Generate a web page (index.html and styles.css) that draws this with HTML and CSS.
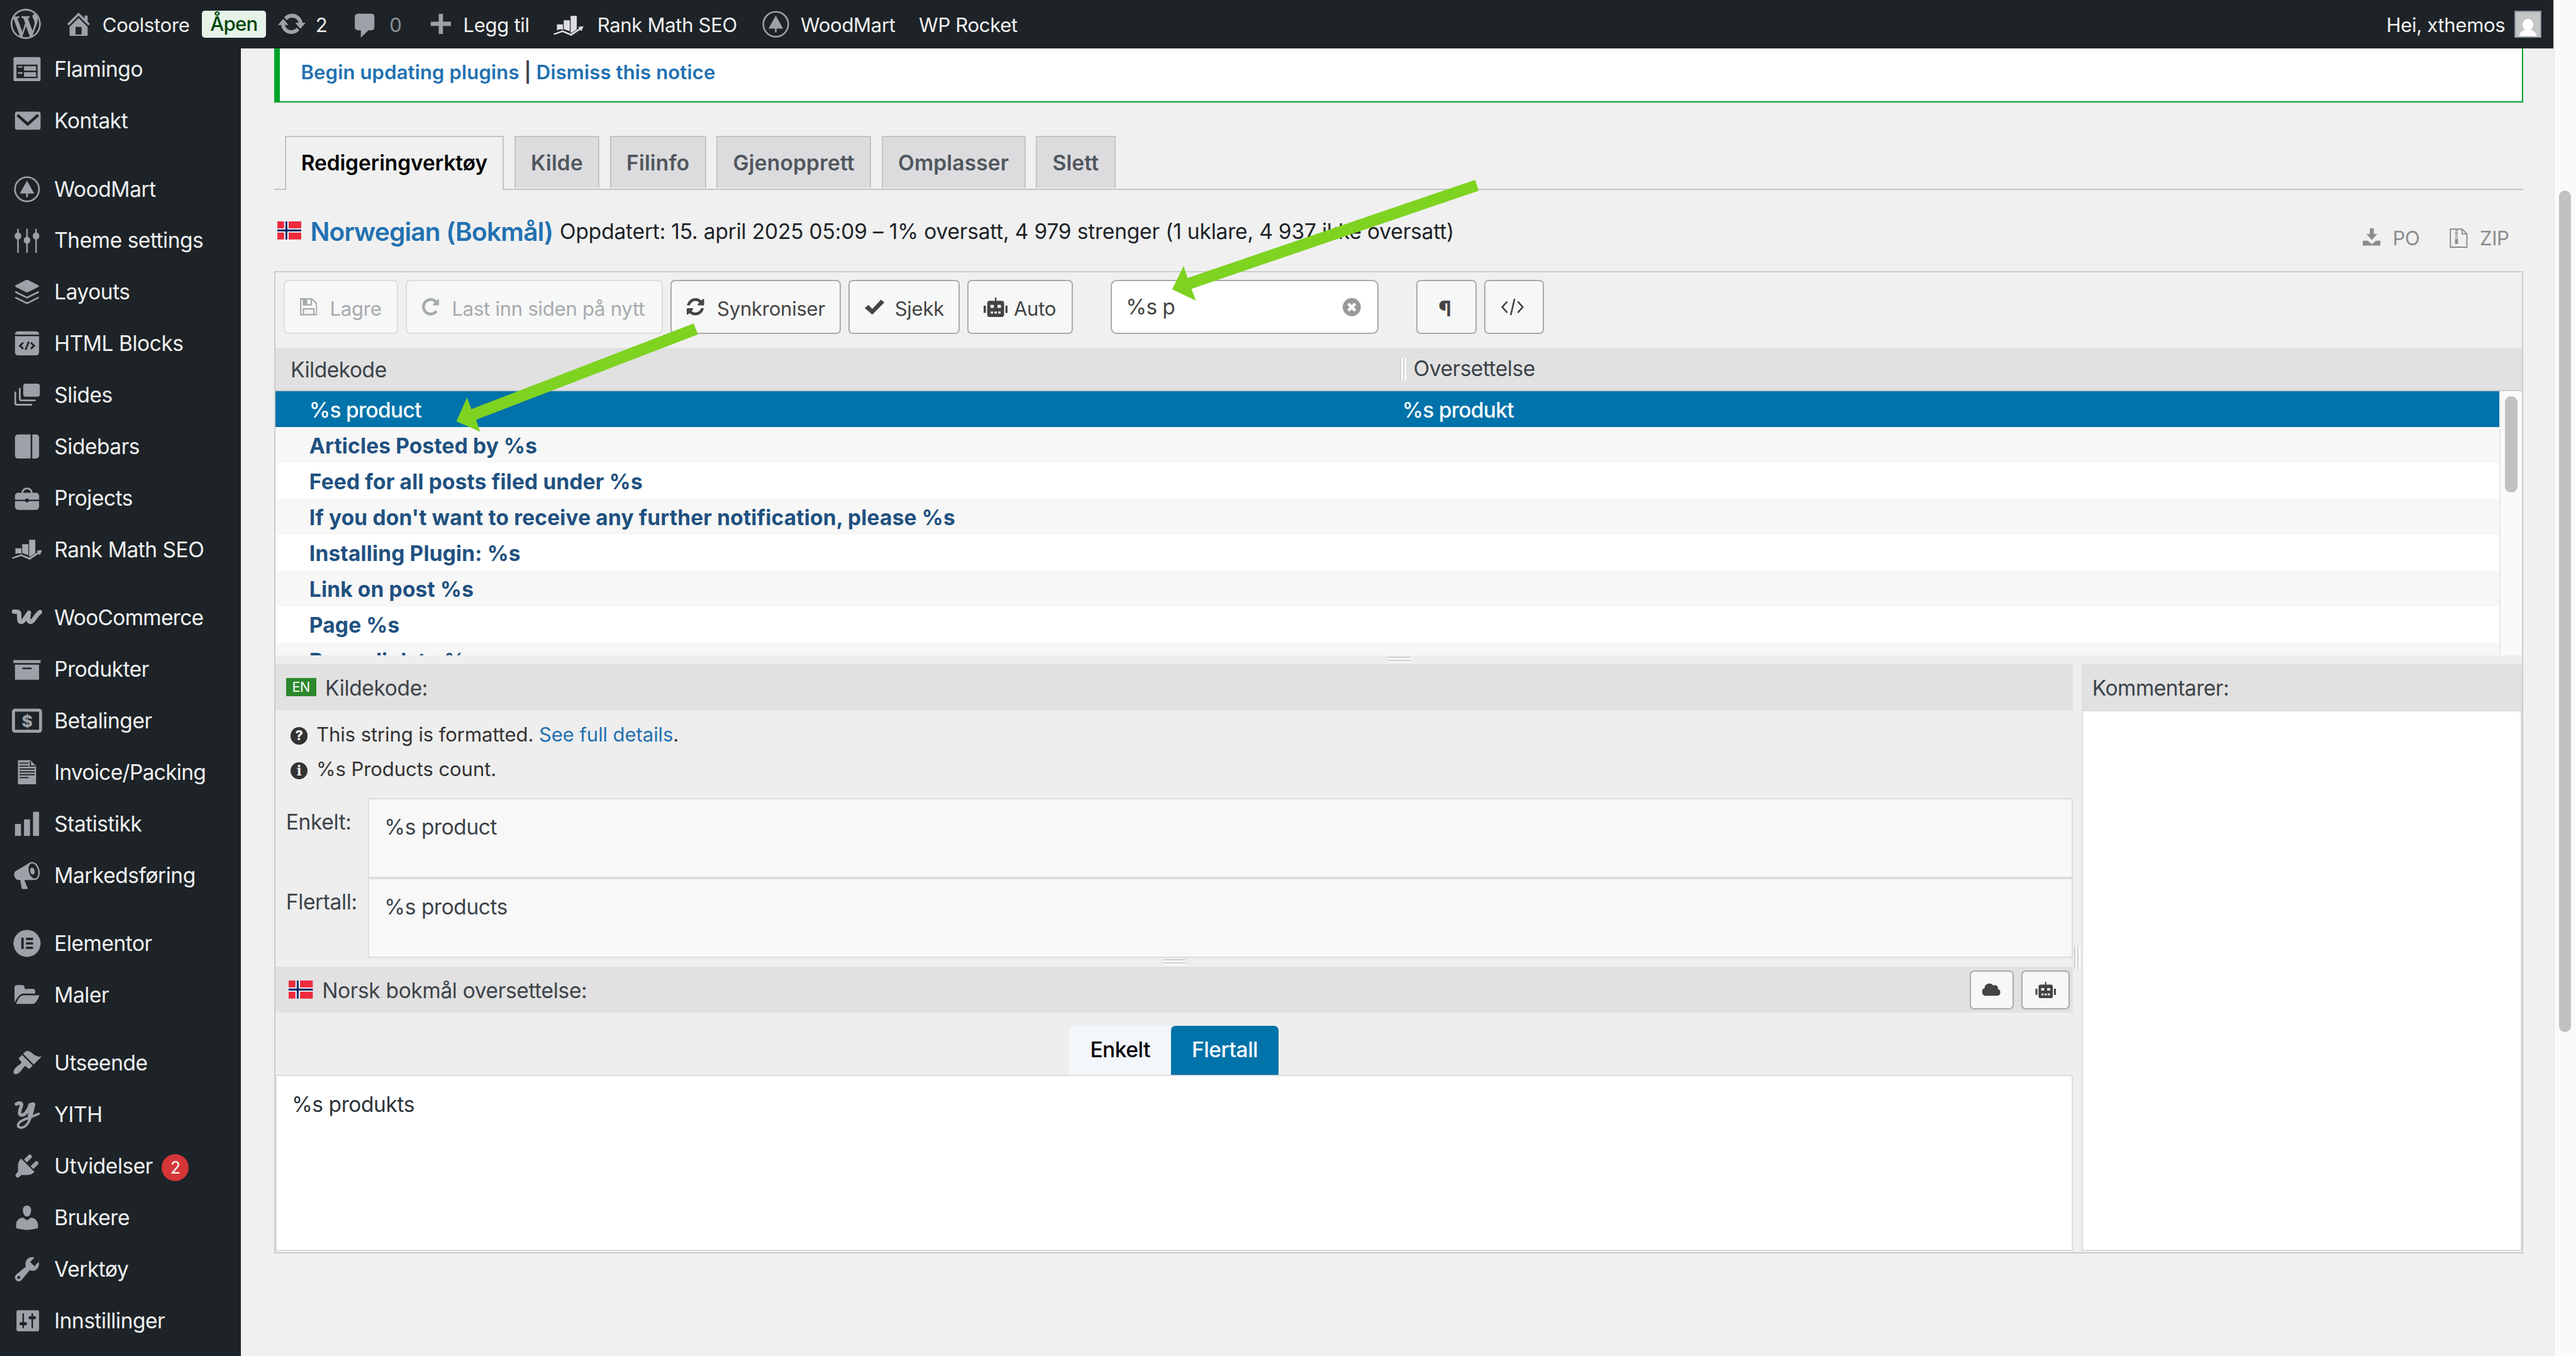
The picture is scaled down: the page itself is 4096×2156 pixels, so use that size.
FILE: index.html
```html
<!DOCTYPE html>
<html lang="nb">
<head>
    <meta charset="UTF-8">
    <meta name="viewport" content="width=device-width, initial-scale=1.0">
    <title>Redigeringverktøy - Coolstore</title>
    <link rel="stylesheet" href="styles.css">
</head>
<body>
<div class="page">
    <div class="screen">
        <header class="adminbar">
            <div class="bar-item wp-logo">
                <svg class="icon" viewBox="0 0 20 20"><path d="M20 10c0-5.51-4.49-10-10-10C4.48 0 0 4.49 0 10c0 5.52 4.48 10 10 10 5.51 0 10-4.48 10-10zM7.78 15.37L4.37 6.22c.55-.02 1.17-.08 1.17-.08.5-.06.44-1.13-.06-1.11 0 0-1.45.11-2.37.11-.18 0-.37 0-.58-.01C4.12 2.69 6.87 1.11 10 1.11c2.33 0 4.45.87 6.05 2.34-.68-.11-1.65.39-1.65 1.58 0 .74.45 1.36.9 2.1.35.61.55 1.36.55 2.46 0 1.49-1.4 5-1.4 5l-3.03-8.37c.54-.02.82-.17.82-.17.5-.05.44-1.25-.06-1.22 0 0-1.44.12-2.38.12-.87 0-2.33-.12-2.33-.12-.5-.03-.56 1.2-.06 1.22l.92.08 1.26 3.41zM17.41 10c.24-.64.74-1.87.43-4.25.7 1.29 1.05 2.71 1.05 4.25 0 3.29-1.73 6.24-4.4 7.78.97-2.59 1.94-5.2 2.92-7.78zM6.1 18.09C3.12 16.65 1.11 13.53 1.11 10c0-1.3.23-2.48.72-3.59C3.25 10.3 4.67 14.2 6.1 18.09zm4.03-6.63l2.58 6.98c-.86.29-1.76.45-2.71.45-.79 0-1.57-.11-2.29-.33.81-2.38 1.62-4.74 2.42-7.1z"/></svg>
            </div>
            <div class="bar-item site-name">
                <svg class="icon" viewBox="0 0 20 20"><path d="M16 8.5l1.53 1.53-1.06 1.06L10 4.6l-6.47 6.49-1.06-1.06L10 2.5l4 4v-2h2v4zm-6-2.46l6 5.99V18H4v-5.97zM12 17v-5H8v5h4z"/></svg>
                <span>Coolstore</span>
            </div>
            <div class="bar-item store-status"><span class="status-badge">Åpen</span></div>
            <div class="bar-item updates">
                <svg class="icon" viewBox="0 0 20 20"><path d="M10.2 3.28c3.53 0 6.43 2.61 6.92 6h2.08l-3.5 4-3.5-4h2.32c-.45-1.97-2.21-3.45-4.32-3.45-1.45 0-2.73.71-3.54 1.78L4.95 5.66C6.23 4.2 8.11 3.28 10.2 3.28zm-.4 13.44c-3.52 0-6.43-2.61-6.92-6H.8l3.5-4c1.17 1.33 2.33 2.67 3.5 4H5.48c.45 1.97 2.21 3.45 4.32 3.45 1.45 0 2.73-.71 3.54-1.78l1.71 1.95c-1.28 1.46-3.15 2.38-5.25 2.38z"/></svg>
                <span>2</span>
            </div>
            <div class="bar-item comments">
                <svg class="icon" viewBox="0 0 20 20"><path d="M5 2h9c1.1 0 2 .9 2 2v7c0 1.1-.9 2-2 2h-2l-5 5v-5H5c-1.1 0-2-.9-2-2V4c0-1.1.9-2 2-2z"/></svg>
                <span class="muted">0</span>
            </div>
            <div class="bar-item new-content">
                <svg class="icon" viewBox="0 0 20 20"><path d="M16.7 8.6v2.8h-5.3v5.3H8.6v-5.3H3.3V8.6h5.3V3.3h2.8v5.3z"/></svg>
                <span>Legg til</span>
            </div>
            <div class="bar-item rank-math">
                <svg class="icon" viewBox="0 0 20 14"><path d="M2.3 6.2h4v3.6L4.6 9.4 2.3 10zM6.8 3.4h4.1v7.4L6.8 9.3zM11.4.5h4.1v9l-3.6 2.4-.5-.3zM0 12.3l6.1-2.2 5.6 2.3 5.4-3.6-.8-1 3.7-.4-1.5 3.4-.8-1-5.9 4-5.7-2.5L.5 13.2z"/></svg>
                <span>Rank Math SEO</span>
            </div>
            <div class="bar-item woodmart">
                <svg class="icon" viewBox="0 0 20 20"><circle cx="10" cy="10" r="9.2" fill="none" stroke="currentColor" stroke-width="1.2"/><path d="M10 3.6l5.4 9.6h-4.8v2.8h-1.2v-2.8H4.6z"/></svg>
                <span>WoodMart</span>
            </div>
            <div class="bar-item wp-rocket"><span>WP Rocket</span></div>
            <div class="bar-item account">
                <span>Hei, xthemos</span>
                <svg class="avatar" viewBox="0 0 18 18"><path fill="#8c8f94" d="M0 0h18v18H0z"/><path fill="#c5c5c5" d="M.8.8h16.4v16.4H.8z"/><path fill="#fff" d="M9 5.4c2.1 0 3.5 1.6 3.5 3.8 0 1.5-.7 2.9-1.6 3.6 2.2.4 3.6 1.9 3.9 4.1H3.2c.3-2.2 1.7-3.7 3.9-4.1-.9-.7-1.6-2.1-1.6-3.6C5.5 7 6.9 5.4 9 5.4z"/></svg>
            </div>
        </header>

        <div class="wrap">
            <nav class="menu">
                <a class="menu-item"><svg class="icon" viewBox="0 0 20 20"><path d="M2 2h16c.55 0 1 .45 1 1v14c0 .55-.45 1-1 1H2c-.55 0-1-.45-1-1V3c0-.55.45-1 1-1zm15 14V7H3v9h14zM4 8v1h3V8H4zm4 0v3h8V8H8zm-4 4v1h3v-1H4zm4 0v3h8v-3H8z"/></svg><span>Flamingo</span></a>
                <a class="menu-item"><svg class="icon" viewBox="0 0 20 20"><path d="M3.5 4h14A1.5 1.5 0 0 1 19 5.5v9a1.5 1.5 0 0 1-1.5 1.5h-14A1.5 1.5 0 0 1 2 14.5v-9A1.5 1.5 0 0 1 3.5 4z"/><path d="M3.6 6.2l6.9 6.1 6.9-6.1" fill="none" stroke="#1d2327" stroke-width="1.9"/></svg><span>Kontakt</span></a>
                <div class="menu-sep"></div>
                <a class="menu-item"><svg class="icon" viewBox="0 0 20 20"><circle cx="10" cy="10" r="8" fill="none" stroke="currentColor" stroke-width="1.1"/><path d="M10 4.3l4.8 8.5h-4.2v2.4H9.4v-2.4H5.2z"/></svg><span>WoodMart</span></a>
                <a class="menu-item"><svg class="icon" viewBox="0 0 20 20"><path d="M3.5 2h1v16h-1zM9.5 2h1v16h-1zM15.5 2h1v16h-1z"/><ellipse cx="4" cy="6.8" rx="2.2" ry="2.4"/><ellipse cx="10" cy="9.6" rx="2.2" ry="2.4"/><ellipse cx="16" cy="6.8" rx="2.2" ry="2.4"/></svg><span>Theme settings</span></a>
                <a class="menu-item"><svg class="icon" viewBox="0 0 20 20"><path d="M9.3 2.2a1.5 1.5 0 0 1 1.4 0l6.6 3.3q1.1.7 0 1.4l-6.6 3.3a1.5 1.5 0 0 1-1.4 0L2.7 6.9q-1.1-.7 0-1.4z"/><path d="M2.2 10l7.8 3.9 7.8-3.9M2.2 13.7l7.8 3.9 7.8-3.9" fill="none" stroke="currentColor" stroke-width="1.1"/></svg><span>Layouts</span></a>
                <a class="menu-item"><svg class="icon" viewBox="0 0 20 20"><path d="M4 2h12a2 2 0 0 1 2 1.9v.3H2v-.3A2 2 0 0 1 4 2zM2 5.2h16V16a2 2 0 0 1-2 2H4a2 2 0 0 1-2-2z"/><path d="M7.5 9.5L5.3 11.6l2.2 2M12.5 9.5l2.2 2.1-2.2 2M11.2 8.9L9 14.3" fill="none" stroke="#1d2327" stroke-width="1.2"/></svg><span>HTML Blocks</span></a>
                <a class="menu-item"><svg class="icon" viewBox="0 0 20 20"><rect x="7.5" y="2.5" width="11" height="8.7" rx="1.6"/><path d="M5.2 5.8v6.7q0 1.1 1.1 1.1h9M2.2 8.3v6.9q0 1.3 1.3 1.3h9.3" fill="none" stroke="currentColor" stroke-width="1.2" stroke-linecap="round"/></svg><span>Slides</span></a>
                <a class="menu-item"><svg class="icon" viewBox="0 0 20 20"><path d="M4 2h8.4v16H4a2 2 0 0 1-2-2V4a2 2 0 0 1 2-2zM13.5 2H16a2 2 0 0 1 2 2v12a2 2 0 0 1-2 2h-2.5z"/></svg><span>Sidebars</span></a>
                <a class="menu-item"><svg class="icon" viewBox="0 0 20 20"><path d="M4 6.5h12a2 2 0 0 1 2 2v2.6h-6.7a1.4 1.4 0 0 0-2.6 0H2V8.5a2 2 0 0 1 2-2zM2 12h6.7a1.4 1.4 0 0 0 2.6 0H18v3.8a2 2 0 0 1-2 2H4a2 2 0 0 1-2-2z"/><path d="M6.7 7C7 4.7 8 3.6 10 3.6S13 4.7 13.3 7" fill="none" stroke="currentColor" stroke-width="1.1"/></svg><span>Projects</span></a>
                <a class="menu-item rank"><svg class="icon" viewBox="0 0 20 14"><path d="M2.3 6.2h4v3.6L4.6 9.4 2.3 10zM6.8 3.4h4.1v7.4L6.8 9.3zM11.4.5h4.1v9l-3.6 2.4-.5-.3zM0 12.3l6.1-2.2 5.6 2.3 5.4-3.6-.8-1 3.7-.4-1.5 3.4-.8-1-5.9 4-5.7-2.5L.5 13.2z"/></svg><span>Rank Math SEO</span></a>
                <div class="menu-sep"></div>
                <a class="menu-item woo"><svg class="icon" viewBox="0 0 20 20"><path d="M1.3 6c2.6 0 3.5.2 3.5 1.6 0 2.7-.2 5.2 1.3 5.2 1.9 0 3.3-3.7 5.2-6-.8 3-.8 6 1 6 1.900 0 3-3.9 6.400-6.5" fill="none" stroke="currentColor" stroke-width="2.9" stroke-linecap="round" stroke-linejoin="round"/></svg><span>WooCommerce</span></a>
                <a class="menu-item"><svg class="icon" viewBox="0 0 20 20"><path d="M19 4v2H1V4h18zM2 7h16v10H2V7zm11 3V9H7v1h6z"/></svg><span>Produkter</span></a>
                <a class="menu-item"><svg class="icon" viewBox="0 0 20 20"><rect x="1" y="3" width="18" height="14" rx="1" fill="none" stroke="currentColor" stroke-width="2"/><text x="10" y="14" text-anchor="middle" class="icon-text">$</text></svg><span>Betalinger</span></a>
                <a class="menu-item tight"><svg class="icon" viewBox="0 0 20 20"><path d="M4 2h8.3L16 5.8V18H4z"/><path d="M5 3.9h6M5 5.9h6M5 7.8h10M5 9.7h10M5 11.6h10M5 13.5h6M12.2 2.6v3.3h3.3" fill="none" stroke="#1d2327" stroke-width=".8"/></svg><span>Invoice/Packing</span></a>
                <a class="menu-item"><svg class="icon" viewBox="0 0 20 20"><path d="M18 18V2h-4v16h4zm-6 0V7H8v11h4zm-6 0v-8H2v8h4z"/></svg><span>Statistikk</span></a>
                <a class="menu-item"><svg class="icon" viewBox="0 0 20 20"><path d="M18.15 5.94c.46 1.62.38 3.22-.02 4.48-.42 1.28-1.26 2.18-2.3 2.48-.16.06-.26.06-.4.06-.06.02-.12.02-.18.02-.06.02-.14.02-.22.02h-6.8l2.22 5.5c.02.14-.06.26-.14.34-.08.1-.24.16-.34.16H6.95c-.1 0-.26-.06-.34-.16-.08-.08-.16-.2-.14-.34l-1-5.5H4.25l-.02-.02c-.5.06-1.08-.18-1.54-.62s-.88-1.08-1.06-1.88c-.24-.8-.2-1.56-.02-2.2.18-.62.58-1.08 1.06-1.3l.02-.02 9-5.4c.1-.06.18-.1.24-.16.06-.04.14-.08.24-.12.16-.08.28-.12.5-.18 1.04-.3 2.24.1 3.22.98s1.84 2.24 2.26 3.86zm-2.58 5.98h-.02c.4-.1.74-.34 1.04-.7.58-.7.86-1.76.86-3.04 0-.64-.1-1.3-.28-1.98-.34-1.36-1.02-2.5-1.78-3.24s-1.68-1.1-2.46-.88c-.82.22-1.4.96-1.7 2-.32 1.04-.28 2.36.06 3.72.38 1.36 1 2.5 1.8 3.24.78.74 1.62 1.1 2.48.88zm-2.54-7.08c.22-.04.42-.02.62.04.38.16.76.48 1.02 1s.42 1.2.42 1.78c0 .3-.04.56-.12.8-.18.48-.44.84-.86.94-.34.1-.8-.06-1.14-.4s-.64-.86-.78-1.5c-.18-.62-.12-1.24.02-1.72s.48-.84.82-.94z"/></svg><span>Markedsføring</span></a>
                <div class="menu-sep"></div>
                <a class="menu-item"><svg class="icon" viewBox="0 0 20 20"><circle cx="10" cy="10" r="9"/><path d="M6.2 6.3h1.6v7.4H6.2zM9.3 6.3H14v1.5H9.3zM9.3 9.25H14v1.5H9.3zM9.3 12.2H14v1.5H9.3z" fill="#1d2327"/></svg><span>Elementor</span></a>
                <a class="menu-item"><svg class="icon" viewBox="0 0 20 20"><path d="M1.7 15V5a1.6 1.6 0 0 1 1.6-1.6h3.5A1.6 1.6 0 0 1 8.4 5v.9h5.4a1.6 1.6 0 0 1 1.6 1.6v1.6H7.5c-1.8 0-3.8 2.2-5.8 5.9zM2.7 16c1.3-3.7 3.2-5.8 4.9-5.8h10.7c-1 2.2-2.3 5.8-4.9 5.8z"/></svg><span>Maler</span></a>
                <div class="menu-sep"></div>
                <a class="menu-item"><svg class="icon" viewBox="0 0 20 20"><path d="M14.48 11.06L7.41 3.99l1.5-1.5c.5-.56 2.3-.47 3.51.32 1.21.8 1.43 1.28 2.91 2.1 1.18.64 2.45 1.26 4.45.85zm-.71.71L6.7 4.7 4.93 6.47c-.39.39-.39 1.02 0 1.41l1.06 1.06c.39.39.39 1.03 0 1.42-.6.6-1.43 1.11-2.21 1.69-.35.26-.7.53-1.01.84C1.43 14.23.4 16.08 1.4 17.07c.99 1 2.84-.03 4.18-1.36.31-.31.58-.66.85-1.02.57-.78 1.08-1.61 1.69-2.21.39-.39 1.02-.39 1.41 0l1.06 1.06c.39.39 1.02.39 1.41 0z"/></svg><span>Utseende</span></a>
                <a class="menu-item"><svg class="icon" viewBox="0 0 20 20"><path d="M3 3.1c1.9-1.2 4-1 3.2 1.3-.9 2.6-2.2 6 .2 6 2.4 0 4.6-3.2 5.6-6.8" fill="none" stroke="currentColor" stroke-width="2.3" stroke-linecap="round"/><path d="M13.9 3c-.5 4.6-1.5 13.6-6.4 15.5-2.2.8-4-.3-3.3-2 1.2-3 6.2-3.6 13.5-6.9" fill="none" stroke="currentColor" stroke-width="1.6" stroke-linecap="round"/><path d="M12.3 2.6c1-1.1 3.6-.7 3.2.9-1 4.5-1.7 8-3.6 10.5l-1.5-3z"/></svg><span>YITH</span></a>
                <a class="menu-item"><svg class="icon" viewBox="0 0 20 20"><path d="M13.11 4.36L9.87 7.6 8 5.73l3.24-3.24c.35-.34 1.05-.2 1.56.32.52.51.66 1.21.31 1.55zm-8 1.77l.91-1.12 9.01 9.01-1.19.84c-.71.71-2.63 1.16-3.82 1.16H6.14L4.9 17.26c-.59.59-1.54.59-2.12 0-.59-.58-.59-1.53 0-2.12l1.24-1.24v-3.88c0-1.13.4-3.19 1.09-3.89zm7.26 3.97l3.24-3.24c.34-.35 1.04-.21 1.55.31.52.51.66 1.21.31 1.55l-3.24 3.25z"/></svg><span>Utvidelser</span><b class="count">2</b></a>
                <a class="menu-item"><svg class="icon" viewBox="0 0 20 20"><path d="M10 9.25c-2.27 0-2.73-3.44-2.73-3.44C7 4.02 7.82 2 9.97 2c2.16 0 2.98 2.02 2.71 3.81 0 0-.41 3.44-2.68 3.44zm0 2.57L12.72 10c2.39 0 4.52 2.33 4.52 4.53v2.49s-3.65 1.13-7.24 1.13c-3.65 0-7.24-1.13-7.24-1.13v-2.49c0-2.25 1.94-4.48 4.47-4.48z"/></svg><span>Brukere</span></a>
                <a class="menu-item"><svg class="icon" viewBox="0 0 20 20"><path d="M16.68 9.77c-1.34 1.34-3.3 1.67-4.95.99l-5.41 6.52c-.99.99-2.59.99-3.58 0s-.99-2.59 0-3.57l6.52-5.42c-.68-1.65-.35-3.61.99-4.95 1.28-1.28 3.12-1.62 4.72-1.06l-2.89 2.89 2.82 2.82 2.86-2.87c.53 1.58.18 3.39-1.08 4.65zM3.81 16.21c.4.39 1.04.39 1.43 0 .4-.4.4-1.04 0-1.43-.39-.4-1.03-.4-1.43 0-.39.39-.39 1.03 0 1.43z"/></svg><span>Verktøy</span></a>
                <a class="menu-item"><svg class="icon" viewBox="0 0 20 20"><path d="M18 16V4c0-.55-.45-1-1-1H4c-.55 0-1 .45-1 1v12c0 .55.45 1 1 1h13c.55 0 1-.45 1-1zM8 11h1c.55 0 1 .45 1 1s-.45 1-1 1H8v1.5c0 .28-.22.5-.5.5s-.5-.22-.5-.5V13H6c-.55 0-1-.45-1-1s.45-1 1-1h1V5.5c0-.28.22-.5.5-.5s.5.22.5.5V11zm5-2h-1c-.55 0-1-.45-1-1s.45-1 1-1h1V5.5c0-.28.22-.5.5-.5s.5.22.5.5V7h1c.55 0 1 .45 1 1s-.45 1-1 1h-1v5.5c0 .28-.22.5-.5.5s-.5-.22-.5-.5V9z"/></svg><span>Innstillinger</span></a>
            </nav>

            <main class="content">
                <div class="notice"><a>Begin updating plugins</a> | <a>Dismiss this notice</a></div>

                <div class="tabs">
                    <a class="tab active">Redigeringverktøy</a>
                    <a class="tab">Kilde</a>
                    <a class="tab">Filinfo</a>
                    <a class="tab">Gjenopprett</a>
                    <a class="tab">Omplasser</a>
                    <a class="tab">Slett</a>
                </div>

                <div class="heading">
                    <svg class="flag" viewBox="0 0 16 12"><path fill="#ef2b3d" d="M0 0h16v12H0z"/><path fill="#fff" d="M4.5 0h3v12h-3zM0 4.6h16v2.8H0z"/><path fill="#002868" d="M5.35 0h1.3v12h-1.3zM0 5.35h16v1.3H0z"/></svg>
                    <a class="lang">Norwegian (Bokmål)</a>
                    <span class="stats">Oppdatert: 15. april 2025 05:09 – 1% oversatt, 4 979 strenger (1 uklare, 4 937 ikke oversatt)</span>
                    <div class="downloads">
                        <a><svg class="dl" viewBox="0 0 12 13"><path d="M4.7 0h2.6v3.8h2.3L6 7.8 2.4 3.8h2.3zM0 8.3h3.3L6 10.5l2.7-2.2H12v3.2H0z"/></svg>PO</a>
                        <a><svg class="dl" viewBox="0 0 12 13"><path d="M.5.5h7.8l3.2 3.2v8.8H.5zM8.3.5v3.2h3.2" fill="none" stroke="currentColor" stroke-width=".8"/><path d="M4.6 1.2v6" fill="none" stroke="currentColor" stroke-width="1.8" stroke-dasharray=".8 .6"/><path d="M3.6 7.2h2v3.2h-2z"/></svg>ZIP</a>
                    </div>
                </div>

                <section class="editor">
                    <div class="toolbar">
                        <button class="btn save" disabled><svg class="glyph" viewBox="0 0 12 12"><path d="M.5.5h7.7l3.3 3.3v7.7H.5zM2.4.5h5.4v4.1H2.4zM2.4 11.5v-4h7.2v4" fill="none" stroke="currentColor" stroke-width=".95"/><path d="M2.4.5h2.7v4.1H2.4z"/></svg><span>Lagre</span></button>
                        <button class="btn reload" disabled><svg class="glyph" viewBox="128 128 1536 1536"><path d="M1664 256v448q0 26-19 45t-45 19h-448q-42 0-59-40-17-39 14-69l138-138q-148-137-349-137-104 0-198.5 40.5t-163.5 109.5-109.5 163.5-40.5 198.5 40.5 198.5 109.5 163.5 163.5 109.5 198.5 40.5q119 0 225-52t179-147q7-10 23-12 15 0 25 9l137 138q9 8 9.5 20.5t-7.5 22.5q-109 132-264 204.5t-327 72.5q-156 0-298-61t-245-164-164-245-61-298 61-298 164-245 245-164 298-61q147 0 284.5 55.5t244.5 156.5l130-129q29-31 70-14 39 17 39 59z"/></svg><span>Last inn siden på nytt</span></button>
                        <button class="btn sync"><svg class="glyph" viewBox="128 128 1536 1536"><path d="M1639 1056q0 5-1 7-64 268-268 434.5t-478 166.5q-146 0-282.5-55t-243.5-157l-129 129q-19 19-45 19t-45-19-19-45v-448q0-26 19-45t45-19h448q26 0 45 19t19 45-19 45l-137 137q71 66 161 102t187 36q134 0 250-65t186-179q11-17 53-117 8-23 30-23h192q13 0 22.5 9.5t9.5 22.5zm25-800v448q0 26-19 45t-45 19h-448q-26 0-45-19t-19-45 19-45l138-138q-148-137-349-137-134 0-250 65t-186 179q-11 17-53 117-8 23-30 23h-199q-13 0-22.5-9.5t-9.5-22.5v-7q65-268 270-434.5t480-166.5q146 0 284 55.5t245 156.5l130-129q19-19 45-19t45 19 19 45z"/></svg><span>Synkroniser</span></button>
                        <button class="btn check"><svg class="glyph" viewBox="0 0 13 12"><path d="M0 6.6l2.5-2.1L5 7.2 10.8 1 13 2.9 5 11z"/></svg><span>Sjekk</span></button>
                        <button class="btn auto"><svg class="robot" viewBox="0 0 16 13"><path d="M7.5 0h1v2.2H12a1.6 1.6 0 0 1 1.6 1.6v7.6A1.6 1.6 0 0 1 12 13H4a1.6 1.6 0 0 1-1.6-1.6V3.8A1.6 1.6 0 0 1 4 2.2h3.5zM0 5.4h1.5v4.8H0zM14.5 5.4H16v4.8h-1.5z"/><path fill="#f6f7f7" d="M4.5 4.9h2.3v2H4.5zM9.2 4.9h2.3v2H9.2zM4.7 9.3h1.6v1.3H4.7zM7.2 9.3h1.6v1.3H7.2zM9.7 9.3h1.6v1.3H9.7z"/></svg><span>Auto</span></button>
                        <div class="search"><span>%s p</span><svg class="clear" viewBox="0 0 12 12"><circle cx="6" cy="6" r="6"/><path d="M3.7 3.7l4.6 4.6M8.3 3.7L3.7 8.3" stroke="#fff" stroke-width="2"/></svg></div>
                        <button class="btn square para"><b>¶</b></button>
                        <button class="btn square"><svg class="code" viewBox="0 0 15 11"><path d="M4 1.8L.7 5.5 4 9.2M11 1.8l3.3 3.7L11 9.2M8.9 0L6.3 11" fill="none" stroke="currentColor" stroke-width="1.1"/></svg></button>
                    </div>

                    <div class="list-head">
                        <div class="col-source">Kildekode</div>
                        <div class="col-target"><i class="grip-v"></i>Oversettelse</div>
                    </div>
                    <div class="list">
                        <div class="rows">
                            <div class="row selected"><span>%s product</span><span>%s produkt</span></div>
                            <div class="row">Articles Posted by %s</div>
                            <div class="row">Feed for all posts filed under %s</div>
                            <div class="row">If you don't want to receive any further notification, please %s</div>
                            <div class="row">Installing Plugin: %s</div>
                            <div class="row">Link on post %s</div>
                            <div class="row">Page %s</div>
                            <div class="row">Permalink to %s</div>
                        </div>
                        <div class="list-scroll"><div class="list-thumb"></div></div>
                    </div>
                    <div class="splitter"><i class="grip-h"></i></div>

                    <div class="panes">
                        <div class="pane-left">
                            <div class="pane-head source-head"><span class="en">EN</span><span>Kildekode:</span></div>
                            <div class="source">
                                <div class="meta"><i class="dot">?</i><span>This string is formatted. <a>See full details</a>.</span></div>
                                <div class="meta"><i class="dot info">i</i><span>%s Products count.</span></div>
                                <div class="field"><label>Enkelt:</label><div class="box">%s product</div></div>
                                <div class="field"><label>Flertall:</label><div class="box">%s products</div></div>
                            </div>
                            <div class="splitter"><i class="grip-h"></i></div>
                            <div class="pane-head target-head">
                                <svg class="flag" viewBox="0 0 16 12"><path fill="#ef2b3d" d="M0 0h16v12H0z"/><path fill="#fff" d="M4.5 0h3v12h-3zM0 4.6h16v2.8H0z"/><path fill="#002868" d="M5.35 0h1.3v12h-1.3zM0 5.35h16v1.3H0z"/></svg>
                                <span>Norsk bokmål oversettelse:</span>
                                <button class="mini cloud-btn"><svg class="cloud" viewBox="0 0 12 9"><path d="M2.7 8.5A2.7 2.7 0 0 1 1.5 3.3 3.2 3.2 0 0 1 7.3 1.7 2 2 0 0 1 10.3 4 2.3 2.3 0 0 1 9.7 8.5z"/></svg></button>
                                <button class="mini robot-btn"><svg class="robot small" viewBox="0 0 16 13"><path d="M7.5 0h1v2.2H12a1.6 1.6 0 0 1 1.6 1.6v7.6A1.6 1.6 0 0 1 12 13H4a1.6 1.6 0 0 1-1.6-1.6V3.8A1.6 1.6 0 0 1 4 2.2h3.5zM0 5.4h1.5v4.8H0zM14.5 5.4H16v4.8h-1.5z"/><path fill="#f6f7f7" d="M4.5 4.9h2.3v2H4.5zM9.2 4.9h2.3v2H9.2zM4.7 9.3h1.6v1.3H4.7zM7.2 9.3h1.6v1.3H7.2zM9.7 9.3h1.6v1.3H9.7z"/></svg></button>
                            </div>
                            <div class="plural-tabs"><a class="plural">Enkelt</a><a class="plural on">Flertall</a></div>
                            <div class="target">%s produkts</div>
                        </div>
                        <div class="pane-gap"><i class="grip-v"></i></div>
                        <div class="pane-right">
                            <div class="pane-head comments-head">Kommentarer:</div>
                            <div class="notes"></div>
                        </div>
                    </div>
                </section>
            </main>
        </div>

        <svg class="arrows" viewBox="0 0 1695 900">
            <path d="M778.1 192l7.600-15.500 2.700 8L979.200 119.400l2.400 7.200L791 191.700l2.800 7.900z"/>
            <path d="M303 279.700l7-15.900 2.900 7.800L460.500 214.700l2.800 7.300L316 278.700l2.800 7.900z"/>
        </svg>
    </div>
    <div class="scrollbar"><div class="thumb"></div></div>
</div>
</body>
</html>
```
FILE: styles.css
```css
* {
    box-sizing: border-box;
}
html {
    background: #f0f0f0;
    overflow: hidden;
}
body {
    margin: 0;
    font-family: Inter, "Liberation Sans", Arial, sans-serif;
    font-size: 13px;
    color: #3c434a;
}
a {
    color: #2271b1;
}
/* the admin screen is laid out at 1710 x 900 and scaled up */
.page {
    zoom: 2.39532;
    display: flex;
    width: 1710px;
    height: 900px;
    overflow: hidden;
}
.screen {
    position: relative;
    display: flex;
    flex-direction: column;
    width: 1695px;
    height: 900px;
    overflow: hidden;
}
svg {
    display: block;
    flex: none;
    fill: currentColor;
}
.icon {
    width: 20px;
    height: 20px;
    color: #9ca2a7;
}

/* admin bar */
.adminbar {
    display: flex;
    flex: none;
    height: 32px;
    background: #1d2327;
    color: #f0f0f1;
    z-index: 2;
}
.bar-item {
    display: flex;
    align-items: center;
    height: 32px;
    white-space: nowrap;
    letter-spacing: -0.15px;
}
.bar-item span {
    padding-top: 1px;
}
.wp-logo {
    width: 42px;
    padding-left: 7px;
}
.site-name {
    width: 92px;
    gap: 6px;
}
.store-status {
    width: 49.5px;
}
.bar-item .status-badge {
    width: 42.5px;
    height: 18px;
    padding: 0;
    line-height: 18px;
    text-align: center;
    border-radius: 2px;
    background: #e6f2e8;
    color: #00450c;
    font-weight: 500;
    letter-spacing: -0.3px;
}
.updates {
    width: 49px;
    gap: 6px;
}
.comments {
    width: 50px;
    gap: 6px;
}
.comments .icon {
    margin-top: 2px;
}
.muted {
    color: #8c9196;
}
.new-content {
    width: 85px;
    gap: 5px;
}
.rank-math {
    width: 138.5px;
    gap: 9px;
}
.rank-math .icon {
    height: 14px;
    margin-top: 2px;
    color: #dcdcde;
}
.woodmart {
    width: 104px;
    gap: 7.5px;
}
.woodmart .icon {
    width: 18px;
    height: 18px;
}
.account {
    margin-left: auto;
    gap: 6px;
}
.avatar {
    width: 18px;
    height: 18px;
    margin-right: 8px;
}

.wrap {
    display: flex;
    flex: 1;
    min-height: 0;
}

/* left menu */
.menu {
    width: 160px;
    height: 871px;
    margin-top: -3px;
    background: #1d2327;
    font-size: 14px;
}
.menu-item {
    display: flex;
    align-items: center;
    height: 34.2px;
    padding-left: 8px;
    gap: 8px;
    white-space: nowrap;
    letter-spacing: -0.2px;
    color: #f0f0f1;
}
.menu-item.tight,
.menu-item.woo {
    letter-spacing: -0.3px;
}
.menu-item.rank .icon {
    height: 14px;
}
.menu-item.rank .icon,
.menu-item.woo .icon {
    color: #a7aaad;
}
.menu-sep {
    height: 11px;
}
.icon-text {
    font-size: 11px;
    font-weight: 800;
}
.count {
    width: 18px;
    height: 18px;
    margin-left: -2px;
    margin-top: 2px;
    border-radius: 50%;
    background: #d63638;
    color: #fff;
    font-size: 11px;
    font-weight: 400;
    line-height: 18px;
    text-align: center;
}

/* content */
.content {
    flex: 1;
    padding: 0 20px 0 22px;
}
.notice {
    height: 36px;
    border: 1px solid #00a32a;
    border-top: 0;
    border-left-width: 4px;
    padding-left: 14px;
    background: #fff;
    font-weight: 600;
    line-height: 32px;
    letter-spacing: 0.04px;
    box-shadow: 0 1px 1px rgba(0, 0, 0, .04);
}
.tabs {
    display: flex;
    gap: 7px;
    margin-top: 22px;
    padding-left: 7px;
    height: 36px;
    border-bottom: 1px solid #c3c4c7;
}
.tab {
    height: 35px;
    padding: 0 10.1px;
    border: 1px solid #c3c4c7;
    border-bottom: 0;
    background: #dcdcde;
    color: #50575e;
    font-size: 14px;
    font-weight: 600;
    line-height: 35px;
    letter-spacing: 0.07px;
}
.tab.active {
    height: 36px;
    padding: 0 10px;
    background: #f0f0f0;
    color: #000;
    letter-spacing: -0.05px;
}
.heading {
    display: flex;
    align-items: center;
    height: 54px;
    padding-left: 2px;
    white-space: nowrap;
}
.flag {
    width: 16px;
    height: 12px;
}
.lang {
    margin-left: 6px;
    padding-top: 1.5px;
    font-size: 17px;
    font-weight: 600;
    letter-spacing: -0.36px;
}
.stats {
    margin-left: 4.5px;
    padding-top: 1px;
    font-size: 14px;
    color: #1d2327;
    letter-spacing: -0.08px;
}
.downloads {
    display: flex;
    gap: 20px;
    margin-left: auto;
    margin-top: 10.5px;
    padding-right: 9.5px;
}
.downloads a {
    display: flex;
    align-items: center;
    gap: 8px;
    color: #8c8c8c;
    letter-spacing: -0.2px;
}
.dl {
    width: 12px;
    height: 13px;
}

/* translation editor */
.editor {
    height: 652px;
    border: 1px solid #ccc;
    background: #eee;
}
.toolbar {
    display: flex;
    height: 50px;
    padding: 5px 0 0 5.3px;
    gap: 5px;
    background: #f0f0f0;
}
.btn {
    display: flex;
    align-items: center;
    height: 36px;
    margin: 0;
    padding: 0 0 0 10px;
    border: 1px solid #aaa;
    border-radius: 3px;
    background: #f6f7f7;
    color: #444;
    font-family: inherit;
    font-size: 13px;
    letter-spacing: -0.12px;
    white-space: nowrap;
}
.btn:disabled {
    border-color: #dcdcde;
    color: #a7aaad;
}
.btn span {
    margin-left: 8.5px;
    padding-top: 2px;
}
.glyph {
    width: 11.5px;
    height: 11.5px;
}
.save {
    width: 76px;
}
.reload {
    width: 171px;
}
.sync {
    width: 113px;
}
.check {
    width: 74px;
}
.check .glyph {
    width: 13px;
    height: 12px;
}
.check span {
    margin-left: 7px;
}
.auto {
    width: 70px;
}
.auto span {
    margin-left: 4px;
}
.robot {
    width: 16px;
    height: 13px;
}
.robot.small {
    width: 14px;
    height: 11px;
}
.search {
    display: flex;
    align-items: center;
    justify-content: space-between;
    width: 178px;
    height: 36px;
    margin: 0 20px;
    padding: 0 11px 0 9.5px;
    border: 1px solid #aaa;
    border-radius: 4px;
    background: #fff;
    color: #444;
    font-size: 14px;
    letter-spacing: -0.3px;
}
.clear {
    width: 12px;
    height: 12px;
    color: #999;
}
.square {
    justify-content: center;
    width: 40px;
    padding: 0 2px 0 0;
}
.para b {
    padding-top: 2px;
    font-size: 14px;
    font-weight: 800;
}
.code {
    width: 15px;
    height: 11px;
}
.list-head {
    display: flex;
    height: 29px;
    border-bottom: 1px solid #ccc;
    background: #e1e1e1;
    font-size: 14px;
    line-height: 30px;
    letter-spacing: -0.2px;
}
.col-source {
    width: 746.5px;
    padding-left: 10px;
}
.col-target {
    display: flex;
    align-items: center;
}
.grip-v {
    width: 4px;
    height: 15px;
    margin-right: 5px;
    background: repeating-linear-gradient(to right, #d0d0d0 0 1px, #fafafa 1px 2px);
}
.list {
    display: flex;
    height: 175px;
    background: #fff;
}
.rows {
    flex: 1;
    overflow: hidden;
    font-size: 14px;
    font-weight: 700;
    color: #1f5180;
    letter-spacing: 0.06px;
}
.row {
    display: flex;
    height: 23.8px;
    padding-top: .6px;
    padding-left: 22.5px;
    line-height: 23.8px;
}
.row:nth-child(even) {
    background: #f7f7f7;
}
.row.selected {
    background: #0073aa;
    color: #fff;
    font-weight: 500;
    letter-spacing: -0.3px;
}
.row.selected span:first-child {
    width: 725.5px;
}
.list-scroll {
    width: 15px;
    padding: 3px 3px 0;
    border-left: 1px solid #e8e8e8;
    background: #fafafa;
}
.list-thumb {
    width: 8px;
    height: 64px;
    border-radius: 4px;
    background: #c1c1c1;
}
.splitter {
    display: flex;
    justify-content: center;
    height: 6px;
    padding-top: 1px;
}
.grip-h {
    width: 15px;
    height: 4px;
    background: repeating-linear-gradient(to bottom, #d0d0d0 0 1px, #fafafa 1px 2px);
}
.panes {
    display: flex;
    height: 390px;
}
.pane-left {
    width: 1193px;
}
.pane-head {
    display: flex;
    align-items: center;
    height: 30.5px;
    padding-left: 7px;
    background: #e1e1e1;
    font-size: 14px;
    letter-spacing: -0.15px;
}
.pane-head span:not(.en) {
    padding-top: 1px;
}
.comments-head {
    padding-top: 1px;
    letter-spacing: -0.2px;
}
.en {
    width: 20px;
    height: 12px;
    margin-right: 6px;
    background: #2d882d;
    color: #fff;
    font-size: 9px;
    line-height: 12px;
    text-align: center;
}
.source {
    height: 164.5px;
    padding: 5px 0 0 7px;
}
.meta {
    display: flex;
    align-items: center;
    height: 23px;
    padding-left: 3px;
    color: #333;
    font-size: 13px;
    letter-spacing: -0.05px;
}
.dot {
    width: 11.5px;
    height: 11.5px;
    margin: 1.5px 5.7px 0 0;
    border-radius: 50%;
    background: #333;
    color: #eee;
    font-size: 9px;
    font-style: normal;
    font-weight: 800;
    line-height: 11.5px;
    text-align: center;
}
.dot.info {
    font-family: "DejaVu Serif", serif;
}
.field {
    display: flex;
    height: 53px;
    font-size: 14px;
    letter-spacing: -0.15px;
}
.field label {
    width: 54.5px;
    padding-top: 7.5px;
}
.meta + .field {
    margin-top: 7.5px;
}
.box {
    flex: 1;
    padding: 10px;
    border: 1px solid #ddd;
    background: #f8f8f8;
    letter-spacing: -0.18px;
}
.target-head .flag {
    margin: 0 6px 0 2px;
}
.target-head {
    padding-right: 2px;
}
.mini {
    display: flex;
    align-items: center;
    justify-content: center;
    height: 26px;
    padding: 0;
    border: 1px solid #aaa;
    border-radius: 3px;
    background: #f6f7f7;
    color: #444;
}
.cloud-btn {
    width: 29.5px;
    margin-left: auto;
}
.robot-btn {
    width: 32px;
    margin-left: 5px;
}
.cloud {
    width: 12px;
    height: 9px;
}
.plural-tabs {
    display: flex;
    justify-content: center;
    height: 41px;
    padding-top: 8.5px;
}
.plural {
    padding: 0 13.8px;
    border-radius: 3px 3px 0 0;
    background: #f3f6fb;
    color: #000;
    font-size: 14px;
    font-weight: 500;
    line-height: 32.5px;
    letter-spacing: -0.2px;
}
.plural.on {
    background: #0073aa;
    color: #fff;
}
.target {
    height: 117px;
    padding: 10.5px 10px;
    border: 1px solid #ddd;
    background: #fff;
    color: #2c3338;
    font-size: 14px;
    letter-spacing: -0.18px;
}
.pane-gap {
    width: 6px;
    padding: 187.5px 1px 0;
}
.pane-gap .grip-v {
    display: block;
}
.pane-right {
    flex: 1;
}
.notes {
    height: 359px;
    border: 1px solid #ddd;
    background: #fff;
}

/* pointer arrows lie over the whole screen */
.arrows {
    position: absolute;
    top: 0;
    left: 0;
    width: 1695px;
    height: 900px;
    color: #7ed321;
    z-index: 3;
}

.scrollbar {
    width: 15px;
    padding: 126.5px 0 0 3px;
    border-left: 1px solid #e8e8e8;
    background: #fafafa;
}
.thumb {
    width: 8px;
    height: 558.5px;
    border-radius: 4px;
    background: #c1c1c1;
}
```
